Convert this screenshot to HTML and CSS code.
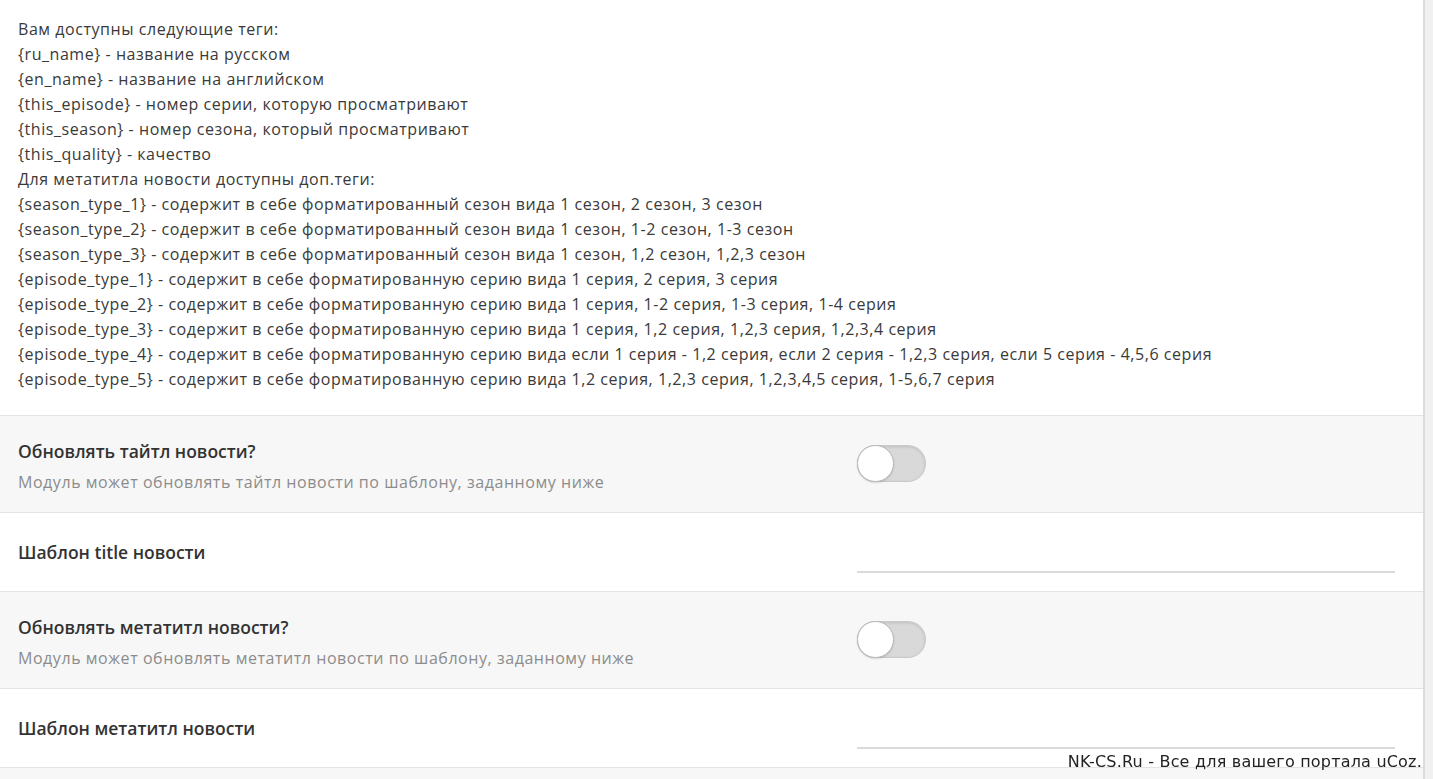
FILE: index.html
```html
<!DOCTYPE html>
<html lang="ru">
<head>
<meta charset="utf-8">
<title>Настройки модуля</title>
<link rel="stylesheet" href="styles.css">
</head>
<body>
<div class="panel">
  <div class="help">
    <div>Вам доступны следующие теги:</div>
    <div>{ru_name} - название на русском</div>
    <div>{en_name} - название на английском</div>
    <div>{this_episode} - номер серии, которую просматривают</div>
    <div>{this_season} - номер сезона, который просматривают</div>
    <div>{this_quality} - качество</div>
    <div>Для метатитла новости доступны доп.теги:</div>
    <div>{season_type_1} - содержит в себе форматированный сезон вида 1 сезон, 2 сезон, 3 сезон</div>
    <div>{season_type_2} - содержит в себе форматированный сезон вида 1 сезон, 1-2 сезон, 1-3 сезон</div>
    <div>{season_type_3} - содержит в себе форматированный сезон вида 1 сезон, 1,2 сезон, 1,2,3 сезон</div>
    <div>{episode_type_1} - содержит в себе форматированную серию вида 1 серия, 2 серия, 3 серия</div>
    <div>{episode_type_2} - содержит в себе форматированную серию вида 1 серия, 1-2 серия, 1-3 серия, 1-4 серия</div>
    <div>{episode_type_3} - содержит в себе форматированную серию вида 1 серия, 1,2 серия, 1,2,3 серия, 1,2,3,4 серия</div>
    <div>{episode_type_4} - содержит в себе форматированную серию вида если 1 серия - 1,2 серия, если 2 серия - 1,2,3 серия, если 5 серия - 4,5,6 серия</div>
    <div>{episode_type_5} - содержит в себе форматированную серию вида 1,2 серия, 1,2,3 серия, 1,2,3,4,5 серия, 1-5,6,7 серия</div>
  </div>

  <div class="row row-alt row-tall">
    <div class="label">
      <div class="title">Обновлять тайтл новости?</div>
      <div class="desc">Модуль может обновлять тайтл новости по шаблону, заданному ниже</div>
    </div>
    <div class="control"><span class="toggle"><span class="knob"></span></span></div>
  </div>

  <div class="row row-short">
    <div class="label"><div class="title">Шаблон title новости</div></div>
    <div class="control control-input"><input class="field" type="text"></div>
  </div>

  <div class="row row-alt row-tall">
    <div class="label">
      <div class="title">Обновлять метатитл новости?</div>
      <div class="desc">Модуль может обновлять метатитл новости по шаблону, заданному ниже</div>
    </div>
    <div class="control"><span class="toggle"><span class="knob"></span></span></div>
  </div>

  <div class="row row-short">
    <div class="label"><div class="title">Шаблон метатитл новости</div></div>
    <div class="control control-input"><input class="field" type="text"></div>
  </div>

  <div class="row row-alt row-tall"></div>
</div>
<div class="copyright">NK-CS.Ru - Все для вашего портала uCoz.</div>
</body>
</html>
```
FILE: styles.css
```css
html, body {
  margin: 0;
  padding: 0;
  background: #f1f1f1;
}
body {
  font-family: "Open Sans", "Noto Sans", sans-serif;
  color: #333;
  overflow: hidden;
  height: 779px;
}
.panel {
  width: 1425px;
  background: #fff;
  border-right: 2px solid #dcdcdc;
  box-sizing: border-box;
}
.help {
  padding: 17px 18px 23px;
  font-size: 16px;
  letter-spacing: 0.55px;
  line-height: 25px;
  color: #3a3a3a;
  border-bottom: 1px solid #e3e3e3;
}
.row {
  display: grid;
  grid-template-columns: 839px 538px;
  padding-left: 18px;
  border-bottom: 1px solid #e3e3e3;
  align-items: center;
}
.row-alt { background: #f7f7f7; }
.row-tall { height: 96px; }
.row-tall .label { padding-top: 3px; }
.row-short { height: 78px; }
.title {
  font-size: 17.5px;
  font-weight: 600;
  color: #333;
  line-height: 26px;
}
.desc {
  margin-top: 6px;
  font-size: 16px;
  letter-spacing: 0.55px;
  color: #8c8c8c;
  line-height: 24px;
}
.control { display: flex; align-items: center; }
.control-input { align-self: end; padding-bottom: 18px; }
.toggle {
  position: relative;
  display: block;
  width: 67px;
  height: 35px;
  border-radius: 18px;
  background: #d9d9d9;
  border: 1px solid #c9c9c9;
  box-shadow: inset 0 1px 3px rgba(0,0,0,0.12);
  margin-top: -2px;
}
.knob {
  position: absolute;
  left: -1px;
  top: -1px;
  width: 35px;
  height: 35px;
  border-radius: 50%;
  background: #fff;
  border: 1px solid #b8b8b8;
  box-shadow: 0 1px 2px rgba(0,0,0,0.15);
}
.field {
  width: 538px;
  height: 30px;
  border: 0;
  border-bottom: 2px solid #dadada;
  background: transparent;
  padding: 0;
  outline: none;
  box-sizing: border-box;
}
.copyright {
  position: fixed;
  right: 11px;
  bottom: 8px;
  font-family: "DejaVu Sans", sans-serif;
  font-size: 16px;
  letter-spacing: 0.2px;
  line-height: 18px;
  color: #222;
}
```
